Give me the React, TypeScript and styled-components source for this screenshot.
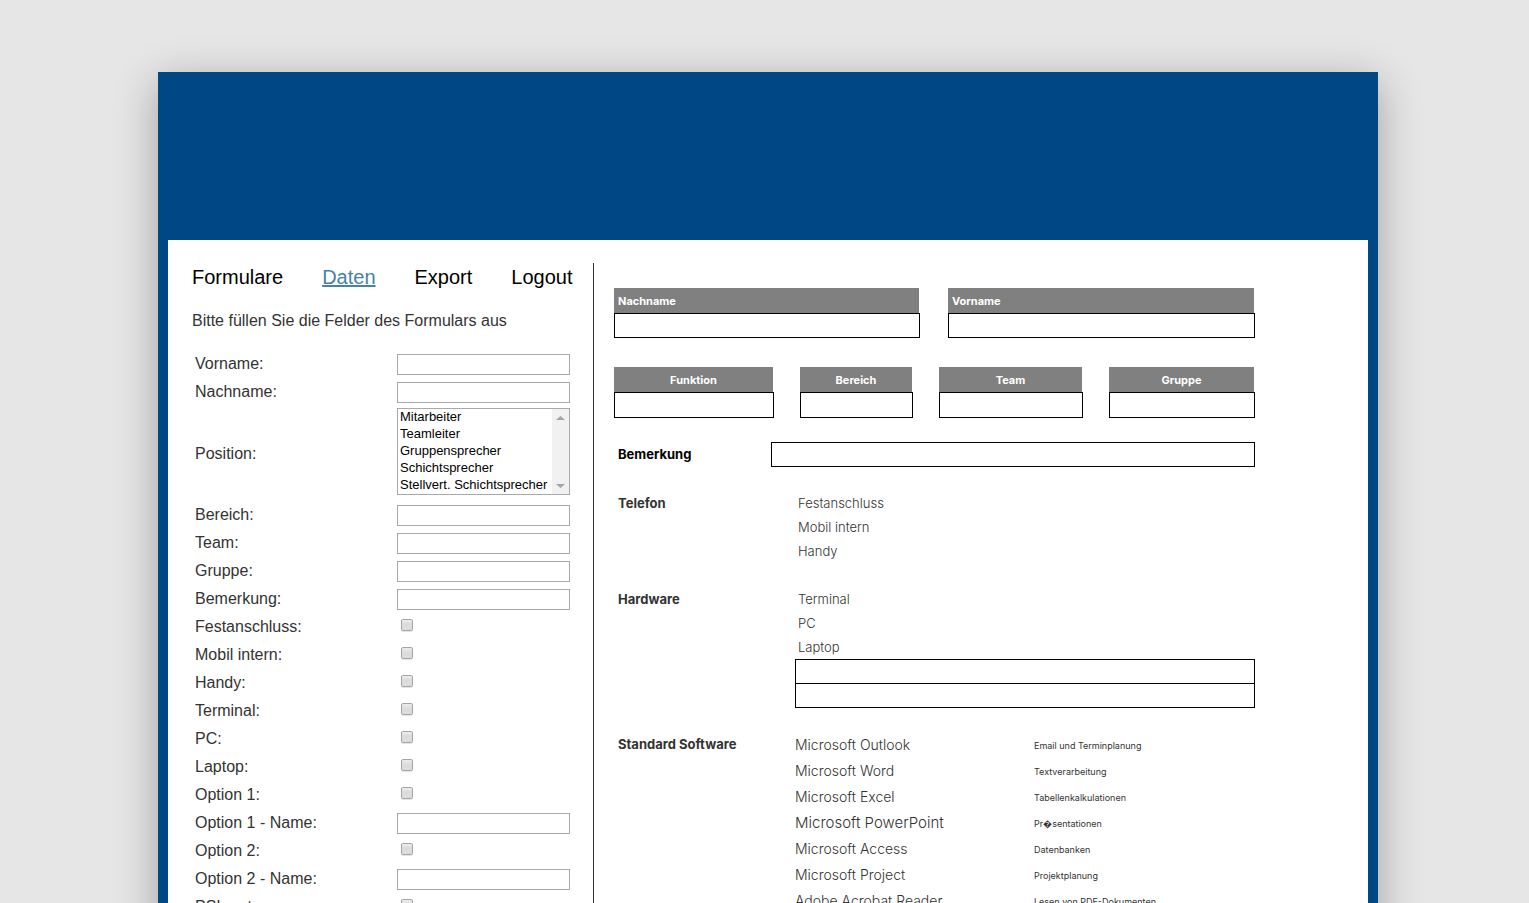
import React from 'react';
import styled, { createGlobalStyle } from 'styled-components';

const GlobalStyle = createGlobalStyle`
  *, *::before, *::after { box-sizing: border-box; }
  body {
    margin: 0;
    background: #e6e6e6;
    color: #333;
    font: 16px/20px "Liberation Sans", Arial, sans-serif;
  }
`;

const Page = styled.div`
  min-width: 1200px;
  padding: 72px 151px 0 158px;
`;

const Card = styled.div`
  background: #004785;
  padding: 0 10px 10px;
  box-shadow: 0 10px 40px rgba(0, 0, 0, 0.3);
`;

const Banner = styled.header`
  height: 168px;
`;

const Content = styled.main`
  display: flex;
  background: #fff;
  padding: 23px 0 40px 24px;
`;

const Sidebar = styled.section`
  flex: none;
  width: 402px;
  border-right: 1px solid #333;
`;

const Nav = styled.nav`
  display: flex;
  gap: 39px;
  font-size: 20px;
  line-height: 28px;
`;

const NavLink = styled.a<{ $active?: boolean }>`
  color: ${(p) => (p.$active ? '#4681ab' : '#000')};
  text-decoration: ${(p) => (p.$active ? 'underline' : 'none')};
`;

const Intro = styled.p`
  margin: 20px 0 17px;
`;

const FormTable = styled.table`
  border-spacing: 2px;
`;

const Cell = styled.td`
  height: 26px;
  padding: 0 1px;
  vertical-align: middle;
`;

const LabelCell = styled(Cell)`
  width: 200px;
  padding-top: 2px;
`;

const TextInput = styled.input`
  display: block;
  width: 173px;
  height: 21px;
  margin-top: 2px;
  padding: 1px 2px;
  border: 1px solid #a9a9a9;
  background: #fff;
  font: 13px "Liberation Sans", Arial, sans-serif;
`;

const Checkbox = styled.input`
  appearance: none;
  display: block;
  width: 12px;
  height: 12px;
  margin: 0 4px 2px;
  border: 1px solid #a6a6a6;
  border-radius: 2px;
  background: linear-gradient(#eee, #dcdcdc 40%);
  box-shadow: 0 1px 1px #e4e4e4;
  &:checked { background: #4681ab; }
`;

const ListFrame = styled.div`
  display: flex;
  width: 173px;
  margin: 2px 0 4px;
  border: 1px solid #a9a9a9;
`;

const ListBox = styled.select`
  flex: 1;
  min-width: 0;
  height: 85px;
  padding: 0;
  border: 0;
  outline: 0;
  overflow: hidden;
  background: #fff;
  color: #000;
  font: 13px "Liberation Sans", Arial, sans-serif;
  scrollbar-width: none;
`;

const ListOption = styled.option`
  height: 17px;
  min-height: 17px;
  padding: 0 2px;
  line-height: 16px;
`;

const ScrollTrack = styled.div`
  display: flex;
  flex: none;
  flex-direction: column;
  justify-content: space-between;
  width: 17px;
  padding: 7px 4px 6px;
  background: #f1f1f1;
`;

const Preview = styled.section`
  flex: 1;
  min-width: 0;
  padding: 25px 113px 0 20px;
  font: 300 13px/24px Inter, "Century Gothic", sans-serif;
`;

const Box = styled.div`
  height: 25px;
  border: 1px solid #000;
  & + & { margin-top: -1px; }
`;

const NameRow = styled.div`
  display: grid;
  grid-template-columns: 306fr 307fr;
  column-gap: 28px;
`;

const UnitRow = styled.div`
  display: grid;
  grid-template-columns: 160fr 113fr 144fr 146fr;
  column-gap: 26px;
  margin-top: 29px;
  text-align: center;

  ${Box} { height: 26px; }
`;

const FieldHead = styled.div`
  height: 25px;
  margin-right: 1px;
  padding: 0 4px;
  background: #808080;
  color: #fff;
  font-size: 11px;
  font-weight: 700;
  line-height: 26px;
`;

const RemarkRow = styled.div`
  display: grid;
  grid-template-columns: 157px 1fr;
  margin: 24px 0;
  color: #000;
`;

const Group = styled.div`
  display: grid;
  grid-template-columns: 181px 1fr;
  margin-bottom: 24px;
`;

const GroupTitle = styled.h2`
  margin: 0;
  padding-left: 4px;
  font-size: 13px;
  font-weight: 700;
  line-height: 24px;
`;

const Item = styled.div`
  padding-left: 3px;
`;

const Software = styled.table`
  width: 100%;
  border-collapse: collapse;
`;

const SoftwareName = styled.td<{ $large?: boolean }>`
  width: 239px;
  height: 26px;
  padding: 0;
  font-size: ${(p) => (p.$large ? 15 : 14)}px;
`;

const SoftwareNote = styled.td`
  padding: 2px 0 0;
  font-size: 9px;
  font-weight: 400;
`;

type Kind = 'text' | 'check' | 'list';

const fields: [string, Kind][] = [
  ['Vorname', 'text'],
  ['Nachname', 'text'],
  ['Position', 'list'],
  ['Bereich', 'text'],
  ['Team', 'text'],
  ['Gruppe', 'text'],
  ['Bemerkung', 'text'],
  ['Festanschluss', 'check'],
  ['Mobil intern', 'check'],
  ['Handy', 'check'],
  ['Terminal', 'check'],
  ['PC', 'check'],
  ['Laptop', 'check'],
  ['Option 1', 'check'],
  ['Option 1 - Name', 'text'],
  ['Option 2', 'check'],
  ['Option 2 - Name', 'text'],
  ['PSIpenta', 'check'],
];

const positions = ['Mitarbeiter', 'Teamleiter', 'Gruppensprecher', 'Schichtsprecher', 'Stellvert. Schichtsprecher'];

const software = [
  ['Microsoft Outlook', 'Email und Terminplanung'],
  ['Microsoft Word', 'Textverarbeitung'],
  ['Microsoft Excel', 'Tabellenkalkulationen'],
  ['Microsoft PowerPoint', 'Pr\uFFFDsentationen'],
  ['Microsoft Access', 'Datenbanken'],
  ['Microsoft Project', 'Projektplanung'],
  ['Adobe Acrobat Reader', 'Lesen von PDF-Dokumenten'],
];

function Control({ id, kind }: { id: string; kind: Kind }) {
  if (kind === 'check') return <Checkbox type="checkbox" id={id} />;
  if (kind === 'text') return <TextInput type="text" id={id} />;
  return (
    <ListFrame>
      <ListBox id={id} size={5}>
        {positions.map((p) => (
          <ListOption key={p}>{p}</ListOption>
        ))}
      </ListBox>
      <ScrollTrack aria-hidden="true">
        <svg width="9" height="4"><path d="M0 4L4.5 0L9 4Z" fill="#a3a3a3" /></svg>
        <svg width="9" height="4"><path d="M0 0L4.5 4L9 0Z" fill="#a3a3a3" /></svg>
      </ScrollTrack>
    </ListFrame>
  );
}

function Field({ title }: { title: string }) {
  return (
    <div>
      <FieldHead>{title}</FieldHead>
      <Box />
    </div>
  );
}

export default function App() {
  return (
    <Page>
      <GlobalStyle />
      <Card>
        <Banner />
        <Content>
          <Sidebar>
            <Nav>
              <NavLink href="#formulare">Formulare</NavLink>
              <NavLink href="#daten" $active>Daten</NavLink>
              <NavLink href="#export">Export</NavLink>
              <NavLink href="#logout">Logout</NavLink>
            </Nav>
            <Intro>Bitte füllen Sie die Felder des Formulars aus</Intro>
            <FormTable>
              <tbody>
                {fields.map(([label, kind], i) => (
                  <tr key={label}>
                    <LabelCell><label htmlFor={`field-${i}`}>{label}:</label></LabelCell>
                    <Cell><Control id={`field-${i}`} kind={kind} /></Cell>
                  </tr>
                ))}
              </tbody>
            </FormTable>
          </Sidebar>
          <Preview>
            <NameRow>
              <Field title="Nachname" />
              <Field title="Vorname" />
            </NameRow>
            <UnitRow>
              <Field title="Funktion" />
              <Field title="Bereich" />
              <Field title="Team" />
              <Field title="Gruppe" />
            </UnitRow>
            <RemarkRow>
              <GroupTitle>Bemerkung</GroupTitle>
              <Box />
            </RemarkRow>
            <Group>
              <GroupTitle>Telefon</GroupTitle>
              <div>
                <Item>Festanschluss</Item>
                <Item>Mobil intern</Item>
                <Item>Handy</Item>
              </div>
            </Group>
            <Group>
              <GroupTitle>Hardware</GroupTitle>
              <div>
                <Item>Terminal</Item>
                <Item>PC</Item>
                <Item>Laptop</Item>
                <Box />
                <Box />
              </div>
            </Group>
            <Group>
              <GroupTitle>Standard Software</GroupTitle>
              <Software>
                <tbody>
                  {software.map(([name, note]) => (
                    <tr key={name}>
                      <SoftwareName $large={name === 'Microsoft PowerPoint'}>{name}</SoftwareName>
                      <SoftwareNote>{note}</SoftwareNote>
                    </tr>
                  ))}
                </tbody>
              </Software>
            </Group>
          </Preview>
        </Content>
      </Card>
    </Page>
  );
}
